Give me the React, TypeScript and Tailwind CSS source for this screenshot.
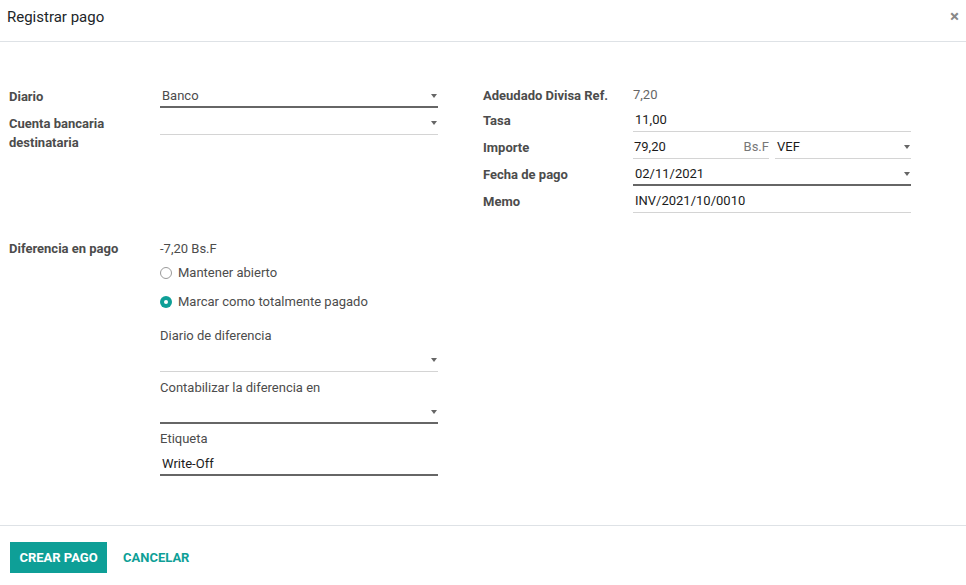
import React from 'react';

const Caret = () => (
  <span className="ml-auto mr-[1px] h-0 w-0 border-x-[3.5px] border-t-[4px] border-x-transparent border-t-[#666]" />
);

function Field({
  value,
  dark = false,
  select = false,
  muted = false,
  className = '',
}: {
  value?: string;
  dark?: boolean;
  select?: boolean;
  muted?: boolean;
  className?: string;
}) {
  return (
    <div
      className={`flex h-[23px] items-center pl-[2px] ${
        dark ? 'border-b-2 border-[#666]' : 'border-b border-[#d4d4d4]'
      } ${className}`}
    >
      <span className={muted ? 'text-[#4c4c4c]' : 'text-[#1b1b1b]'}>{value}</span>
      {select && <Caret />}
    </div>
  );
}

const Label = ({ children, w = 'w-[150px]' }: { children: React.ReactNode; w?: string }) => (
  <div className={`${w} shrink-0 font-bold leading-[19px] text-[#4c4c4c]`}>{children}</div>
);

function Radio({ checked, label }: { checked?: boolean; label: string }) {
  return (
    <div className="flex items-center gap-[6px]">
      {checked ? (
        <span className="flex h-[12px] w-[12px] items-center justify-center rounded-full bg-[#0e9f97]">
          <span className="h-[4px] w-[4px] rounded-full bg-white" />
        </span>
      ) : (
        <span className="h-[12px] w-[12px] rounded-full border border-[#9a9a9a] bg-white" />
      )}
      <span className="text-[#4c4c4c]">{label}</span>
    </div>
  );
}

export default function App() {
  return (
    <div className="h-[585px] w-[966px] bg-white text-[13px] font-['Roboto',sans-serif] text-[#4c4c4c]">
      {/* Header */}
      <div className="flex h-[42px] items-center border-b border-[#dee2e6] pl-[7px] pr-[7px]">
        <h4 className="pb-[6px] text-[15px] text-[#212529]">Registrar pago</h4>
        <span className="ml-auto pb-[9px] text-[17px] font-bold leading-none text-[#888]">×</span>
      </div>

      {/* Body */}
      <div className="h-[483px] pl-[9px] pt-[43px]">
        <div className="flex">
          {/* Left column */}
          <div className="w-[429px]">
            <div className="flex items-center">
              <Label w="w-[151px]">Diario</Label>
              <Field value="Banco" dark select muted className="w-[278px]" />
            </div>
            <div className="mt-[4px] flex items-start">
              <Label w="w-[151px]">
                <div className="pt-[2px]">Cuenta bancaria</div>
                <div>destinataria</div>
              </Label>
              <Field select className="w-[278px]" />
            </div>
          </div>

          {/* Right column */}
          <div className="ml-[45px] w-[428px]">
            <div className="flex h-[20px] items-center">
              <Label>Adeudado Divisa Ref.</Label>
              <span className="text-[#666]">7,20</span>
            </div>
            <div className="mt-[4px] flex items-center">
              <Label>Tasa</Label>
              <Field value="11,00" className="w-[278px]" />
            </div>
            <div className="mt-[4px] flex items-center">
              <Label>Importe</Label>
              <div className="flex w-[278px] gap-[6px]">
                <div className="flex h-[23px] w-[136px] items-center border-b border-[#d4d4d4] pl-[1px]">
                  <span className="text-[#1b1b1b]">79,20</span>
                  <span className="ml-auto text-[#777]">Bs.F</span>
                </div>
                <Field value="VEF" select className="w-[136px]" />
              </div>
            </div>
            <div className="mt-[4px] flex items-center">
              <Label>Fecha de pago</Label>
              <Field value="02/11/2021" dark select className="w-[278px]" />
            </div>
            <div className="mt-[4px] flex items-center">
              <Label>Memo</Label>
              <Field value="INV/2021/10/0010" className="w-[278px]" />
            </div>
          </div>
        </div>

        {/* Payment difference */}
        <div className="mt-[26px] flex">
          <Label w="w-[151px]">Diferencia en pago</Label>
          <div className="w-[278px]">
            <div className="leading-[19px]">-7,20 Bs.F</div>
            <div className="mt-[5px] flex flex-col gap-[10px] leading-[19px]">
              <Radio label="Mantener abierto" />
              <Radio checked label="Marcar como totalmente pagado" />
            </div>
            <div className="mt-[15px] leading-[19px]">Diario de diferencia</div>
            <Field select className="mt-[4px]" />
            <div className="mt-[6px] leading-[19px]">Contabilizar la diferencia en</div>
            <Field dark select className="mt-[4px]" />
            <div className="mt-[5px] leading-[19px]">Etiqueta</div>
            <Field value="Write-Off" dark className="mt-[5px]" />
          </div>
        </div>
      </div>

      {/* Footer */}
      <div className="flex h-[60px] items-start gap-[16px] border-t border-[#dee2e6] pl-[10px] pt-[16px]">
        <button className="h-[31px] w-[97px] pt-[1px] bg-[#0e9f97] text-[13px] font-bold uppercase text-white">
          Crear pago
        </button>
        <button className="h-[31px] pt-[1px] text-[13px] font-bold uppercase text-[#0e9f97]">Cancelar</button>
      </div>
    </div>
  );
}
